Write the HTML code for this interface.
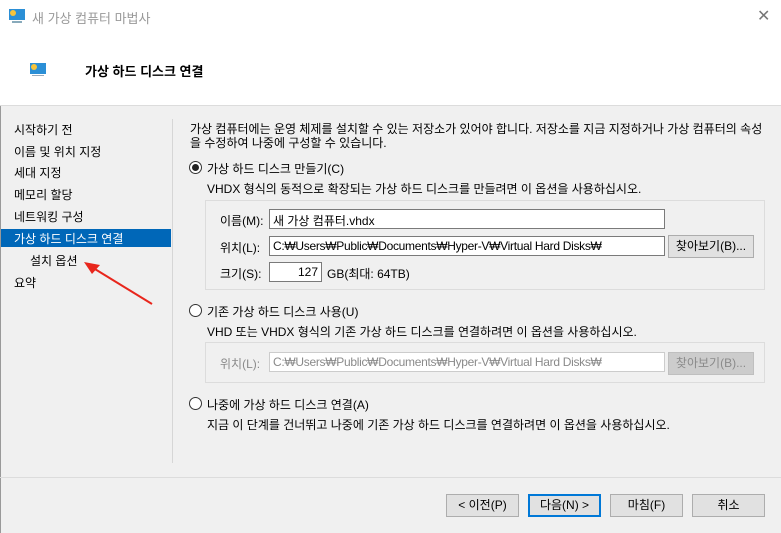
<!DOCTYPE html>
<html><head><meta charset="utf-8"><style>
*{margin:0;padding:0;box-sizing:border-box}
body{width:781px;height:533px;overflow:hidden;background:#f0f0f0;font-family:"Liberation Sans","Noto Sans CJK KR",sans-serif;font-size:12px;color:#000;position:relative}
.a{position:absolute;white-space:nowrap}
.top{position:absolute;left:0;top:0;width:781px;height:106px;background:#fff;border-bottom:1px solid #dcdcdc}
.inp{position:absolute;background:#fff;border:1px solid #7a7a7a;height:20px;padding:2px 3px;font-size:12px;white-space:nowrap;overflow:hidden}
.path{letter-spacing:-0.3px}
.btn{position:absolute;background:#e1e1e1;border:1px solid #adadad;height:23px;text-align:center;line-height:21px;font-size:12px}
.grp{position:absolute;border:1px solid #dcdcdc}
.rad{position:absolute;width:13px;height:13px;border:1px solid #333;border-radius:50%;background:#fff}
.dis{color:#8a8a8a}
</style></head><body>
<div class="a" style="left:0;top:0;width:781px;height:1px;background:#333"></div>
<div class="top"></div>
<div class="a" style="left:0;top:106px;width:1px;height:427px;background:#999"></div>
<svg class="a" style="left:8px;top:8px" width="18" height="16"><rect x="1" y="1" width="16" height="11" fill="#2b8fd6"/><circle cx="5" cy="5" r="3" fill="#f7c33a"/><rect x="4" y="13" width="10" height="2" fill="#8ab"/></svg>
<div class="a" style="left:32px;top:8px;font-size:13px;color:#999">새 가상 컴퓨터 마법사</div>
<div class="a" style="left:757px;top:6px;font-size:16px;color:#777">✕</div>
<svg class="a" style="left:29px;top:62px" width="18" height="16"><rect x="1" y="1" width="16" height="11" fill="#2b8fd6"/><circle cx="5" cy="5" r="3" fill="#f7c33a"/><rect x="3" y="13" width="12" height="1" fill="#9ab"/></svg>
<div class="a" style="left:85px;top:61px;font-size:13px;font-weight:bold">가상 하드 디스크 연결</div>

<div class="a" style="left:14px;top:121px">시작하기 전</div>
<div class="a" style="left:14px;top:143px">이름 및 위치 지정</div>
<div class="a" style="left:14px;top:164px">세대 지정</div>
<div class="a" style="left:14px;top:186px">메모리 할당</div>
<div class="a" style="left:14px;top:208px">네트워킹 구성</div>
<div class="a" style="left:1px;top:229px;width:170px;height:18px;background:#0067b8"></div>
<div class="a" style="left:14px;top:230px;color:#fff">가상 하드 디스크 연결</div>
<div class="a" style="left:30px;top:252px">설치 옵션</div>
<div class="a" style="left:14px;top:274px">요약</div>
<svg class="a" style="left:80px;top:258px" width="80" height="50"><line x1="72" y1="46" x2="10" y2="8" stroke="#e8261c" stroke-width="2"/><polygon points="4,4 20,7 12,16" fill="#e8261c"/></svg>
<div class="a" style="left:172px;top:119px;width:1px;height:344px;background:#d6d6d6"></div>

<div class="a" style="left:190px;top:122px;line-height:14px">가상 컴퓨터에는 운영 체제를 설치할 수 있는 저장소가 있어야 합니다. 저장소를 지금 지정하거나 가상 컴퓨터의 속성<br>을 수정하여 나중에 구성할 수 있습니다.</div>
<div class="rad" style="left:189px;top:161px"></div><div class="a" style="left:192px;top:164px;width:7px;height:7px;border-radius:50%;background:#222"></div>
<div class="a" style="left:207px;top:160px">가상 하드 디스크 만들기(C)</div>
<div class="a" style="left:207px;top:180px">VHDX 형식의 동적으로 확장되는 가상 하드 디스크를 만들려면 이 옵션을 사용하십시오.</div>
<div class="grp" style="left:205px;top:200px;width:560px;height:90px"></div>
<div class="a" style="left:220px;top:212px">이름(M):</div>
<div class="inp" style="left:269px;top:209px;width:396px">새 가상 컴퓨터.vhdx</div>
<div class="a" style="left:220px;top:239px">위치(L):</div>
<div class="inp path" style="left:269px;top:236px;width:396px">C:₩Users₩Public₩Documents₩Hyper-V₩Virtual Hard Disks₩</div>
<div class="btn" style="left:668px;top:235px;width:86px">찾아보기(B)...</div>
<div class="a" style="left:220px;top:265px">크기(S):</div>
<div class="inp" style="left:269px;top:262px;width:53px;text-align:right">127</div>
<div class="a" style="left:327px;top:265px">GB(최대: 64TB)</div>

<div class="rad" style="left:189px;top:304px"></div>
<div class="a" style="left:207px;top:303px">기존 가상 하드 디스크 사용(U)</div>
<div class="a" style="left:207px;top:323px">VHD 또는 VHDX 형식의 기존 가상 하드 디스크를 연결하려면 이 옵션을 사용하십시오.</div>
<div class="grp" style="left:205px;top:342px;width:560px;height:41px"></div>
<div class="a dis" style="left:220px;top:355px">위치(L):</div>
<div class="inp dis path" style="left:269px;top:352px;width:396px;border-color:#ccc">C:₩Users₩Public₩Documents₩Hyper-V₩Virtual Hard Disks₩</div>
<div class="btn dis" style="left:668px;top:352px;width:86px;background:#ccc;border-color:#bfbfbf">찾아보기(B)...</div>

<div class="rad" style="left:189px;top:397px"></div>
<div class="a" style="left:207px;top:396px">나중에 가상 하드 디스크 연결(A)</div>
<div class="a" style="left:207px;top:416px">지금 이 단계를 건너뛰고 나중에 기존 가상 하드 디스크를 연결하려면 이 옵션을 사용하십시오.</div>

<div class="a" style="left:0;top:477px;width:781px;height:1px;background:#dcdcdc"></div>
<div class="btn" style="left:446px;top:494px;width:73px">&lt; 이전(P)</div>
<div class="btn" style="left:528px;top:494px;width:73px;border:2px solid #0078d7;line-height:19px">다음(N) &gt;</div>
<div class="btn" style="left:610px;top:494px;width:73px">마침(F)</div>
<div class="btn" style="left:692px;top:494px;width:73px">취소</div>
</body></html>
